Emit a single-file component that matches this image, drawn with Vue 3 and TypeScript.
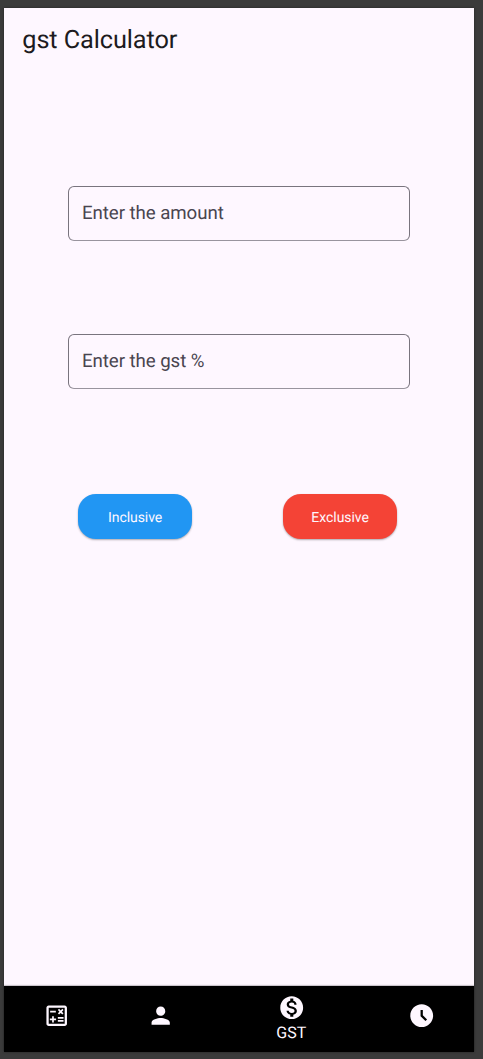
<script setup lang="ts">
import { ref } from 'vue'

interface Field { id: string; label: string }
interface NavItem { id: string; label: string; path: string }

const fields: Field[] = [
  { id: 'amount', label: 'Enter the amount' },
  { id: 'rate', label: 'Enter the gst %' },
]

const items: NavItem[] = [
  {
    id: 'calc',
    label: 'Calculator',
    path: 'M19 3H5c-1.1 0-2 .9-2 2v14c0 1.1.9 2 2 2h14c1.1 0 2-.9 2-2V5c0-1.1-.9-2-2-2zm0 16H5V5h14v14zM6.25 7.72h5v1.5h-5zM13 15.75h5v1.5h-5zM13 13.25h5v1.5h-5zM8 18h1.5v-2h2v-1.5h-2v-2H8v2H6V16h2zM14.09 10.95l1.41-1.41 1.41 1.41 1.06-1.06-1.41-1.42 1.41-1.41L16.91 6 15.5 7.41 14.09 6l-1.06 1.06 1.41 1.41-1.41 1.42z',
  },
  {
    id: 'person',
    label: 'Age',
    path: 'M12 12c2.21 0 4-1.79 4-4s-1.79-4-4-4-4 1.79-4 4 1.79 4 4 4zm0 2c-2.67 0-8 1.34-8 4v2h16v-2c0-2.66-5.33-4-8-4z',
  },
  {
    id: 'gst',
    label: 'GST',
    path: 'M12 2C6.48 2 2 6.48 2 12s4.48 10 10 10 10-4.48 10-10S17.52 2 12 2zm1.41 16.09V20h-2.67v-1.93c-1.71-.36-3.16-1.46-3.27-3.4h1.96c.1 1.05.82 1.87 2.65 1.87 1.96 0 2.4-.98 2.4-1.59 0-.83-.44-1.61-2.67-2.14-2.48-.6-4.18-1.62-4.18-3.67 0-1.72 1.39-2.84 3.11-3.21V4h2.67v1.95c1.86.45 2.79 1.86 2.85 3.39H14.3c-.05-1.11-.64-1.87-2.22-1.87-1.5 0-2.4.68-2.4 1.64 0 .84.65 1.39 2.67 1.91s4.18 1.39 4.18 3.91c-.01 1.83-1.38 2.83-3.12 3.16z',
  },
  {
    id: 'time',
    label: 'Time',
    path: 'M11.99 2C6.47 2 2 6.48 2 12s4.47 10 9.99 10C17.52 22 22 17.52 22 12S17.52 2 11.99 2zm3.3 14.71L11 12.41V7h2v4.59l3.71 3.71-1.42 1.41z',
  },
]

const active = ref('gst')
</script>

<template>
  <div class="frame">
    <div class="screen">
      <header class="bar"><h1>gst Calculator</h1></header>
      <main class="content">
        <label v-for="f in fields" :key="f.id" class="field"><span>{{ f.label }}</span></label>
        <div class="actions">
          <button type="button" class="btn inclusive">Inclusive</button>
          <button type="button" class="btn exclusive">Exclusive</button>
        </div>
      </main>
      <nav class="nav">
        <a
          v-for="item in items"
          :key="item.id"
          class="item"
          :class="{ active: item.id === active }"
          @click="active = item.id"
        >
          <svg viewBox="0 0 24 24"><path :d="item.path" /></svg>
          <span v-if="item.id === active">{{ item.label }}</span>
        </a>
      </nav>
    </div>
  </div>
</template>

<style>
body { margin: 0; background: #3b3b3b; }
</style>

<style scoped>
.frame {
  box-sizing: border-box;
  width: 483px;
  height: 1059px;
  padding: 8px 9px 7px 4px;
  background: #3b3b3b;
  font-family: Roboto, "Liberation Sans", sans-serif;
  text-rendering: geometricPrecision;
}
.screen {
  display: flex;
  flex-direction: column;
  width: 470px;
  height: 1044px;
  background: #fef7ff;
  box-shadow: 0 0 2px #202020;
}
.bar {
  box-sizing: border-box;
  height: 64px;
  padding: 2px 0 0 18.3px;
  display: flex;
  align-items: center;
}
h1 {
  margin: 0;
  font-size: 25.3px;
  font-weight: 400;
  line-height: 32px;
  letter-spacing: -0.1px;
  color: #1d1b20;
}
.content {
  flex: 1;
  padding: 114px 64px 0;
}
.field {
  box-sizing: border-box;
  display: flex;
  align-items: center;
  width: 342px;
  height: 55px;
  margin-bottom: 93px;
  border: 1px solid #79747e;
  border-bottom-color: #99949e;
  border-radius: 6px;
  padding: 0 0 2px 13px;
  font-size: 18.7px;
  line-height: 22px;
  letter-spacing: -0.07px;
  color: #49454f;
}
.actions {
  display: flex;
  justify-content: space-between;
  margin: 104.5px 12.8px 0 10px;
}
.btn {
  width: 114.2px;
  height: 45.7px;
  padding: 3px 0 0;
  border: 0;
  border-radius: 18px;
  font: 400 14px/18px Roboto, "Liberation Sans", sans-serif;
  letter-spacing: -0.05px;
  text-rendering: geometricPrecision;
  color: #fef7ff;
  box-shadow: 0 1px 2px rgba(0, 0, 0, 0.32);
}
.inclusive { background: #2196f3; }
.exclusive { background: #f44336; }
.nav {
  display: flex;
  height: 66px;
  background: #000;
  box-shadow: 0 -1px 1px rgba(0, 0, 0, 0.2);
}
.item {
  flex: 1;
  display: flex;
  flex-direction: column;
  align-items: center;
  padding-top: 15.5px;
  color: #fef7ff;
}
.item.active { flex: 1.5; padding-top: 7.7px; }
.item svg {
  width: 27.4px;
  height: 27.4px;
  fill: currentColor;
}
.item span {
  font-size: 16px;
  line-height: 23px;
}
</style>
